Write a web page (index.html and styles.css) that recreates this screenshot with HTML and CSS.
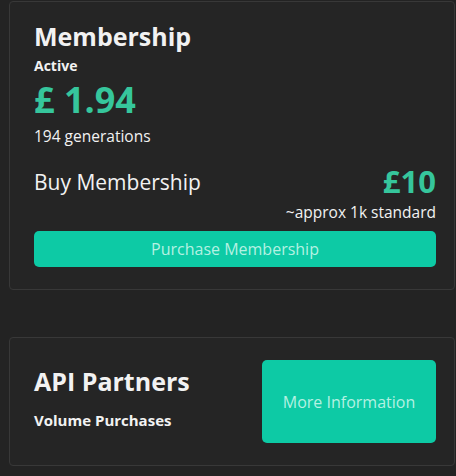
FILE: index.html
```html
<!DOCTYPE html>
<html lang="en">

<head>
    <meta charset="UTF-8">
    <title>Membership</title>
    <link rel="stylesheet" href="styles.css">
</head>

<body>
    <div class="wrap">
        <div class="card member">
            <h1>Membership</h1>
            <p class="status">Active</p>
            <p class="balance">£ 1.94</p>
            <p class="gens">194 generations</p>
            <div class="buy">
                <span class="buy-label">Buy Membership</span>
                <div class="buy-price">
                    <span class="price">£10</span>
                    <span class="approx">~approx 1k standard</span>
                </div>
            </div>
            <a class="btn wide" href="#">Purchase Membership</a>
        </div>
        <div class="card api">
            <div class="api-text">
                <h2>API Partners</h2>
                <p class="status">Volume Purchases</p>
            </div>
            <a class="btn tall" href="#">More Information</a>
        </div>
        <div class="card next"></div>
    </div>
</body>

</html>
```

FILE: styles.css
```css
* {
    padding: 0;
    margin: 0;
    box-sizing: border-box;
}

html,
body {
    background: #232323;
    color: #f2f2f2;
    font-family: "Open Sans", "Noto Sans", sans-serif;
}

.wrap {
    padding: 1px 1px 0 9px;
    display: flex;
    flex-direction: column;
    gap: 47px;
    height: 476px;
    overflow: hidden;
}

.card {
    flex-shrink: 0;
    border: 1px solid #383838;
    border-radius: 4px;
    background: #252525;
}

.member {
    height: 289px;
    padding: 18px 18px 0 24px;
}

.member h1 {
    font-size: 25px;
    line-height: 32px;
    font-weight: 700;
}

.status {
    font-size: 14px;
    font-weight: 700;
    line-height: 20px;
}

.member .status {
    margin-top: 4px;
}

.balance {
    margin-top: 4px;
    font-size: 36px;
    font-weight: 700;
    line-height: 40px;
    color: #36c69c;
}

.gens {
    margin-top: 5px;
    font-size: 15.5px;
    line-height: 22px;
}

.buy {
    margin-top: 17px;
    display: flex;
    justify-content: space-between;
}

.buy-label {
    font-size: 21px;
    line-height: 28px;
    margin-top: 4px;
}

.buy-price {
    display: flex;
    flex-direction: column;
    align-items: flex-end;
}

.price {
    font-size: 31px;
    font-weight: 700;
    line-height: 34px;
    color: #36c69c;
}

.approx {
    margin-top: 3px;
    font-size: 15.5px;
    line-height: 22px;
}

.btn {
    display: flex;
    align-items: center;
    justify-content: center;
    background: #0dcaa5;
    color: #b4f1e2;
    text-decoration: none;
    font-size: 16px;
    border-radius: 5px;
}

.wide {
    height: 36px;
    margin-top: 8px;
}

.api {
    height: 129px;
    padding: 22px 18px 0 24px;
    display: flex;
    justify-content: space-between;
}

.api-text {
    padding-top: 5px;
}

.api h2 {
    font-size: 25px;
    line-height: 32px;
    font-weight: 700;
    margin-bottom: 13px;
}

.api .status {
    font-size: 15px;
}

.tall {
    width: 174px;
    height: 83px;
}

.next {
    height: 40px;
    border-radius: 0;
    margin-left: -9px;
}
```
